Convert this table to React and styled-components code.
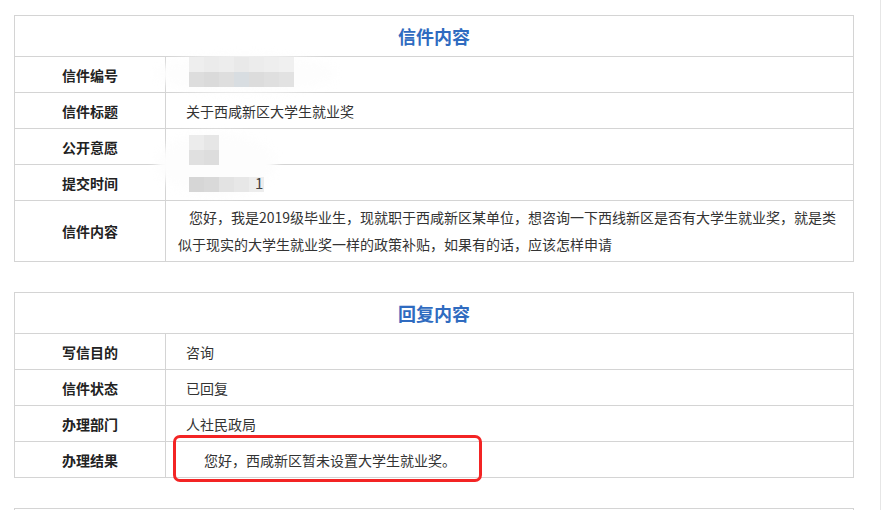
import React from "react"
import styled, { createGlobalStyle } from "styled-components"

const GlobalStyle = createGlobalStyle`
  body {
    margin: 0;
    background: #fff;
    font-family: "Noto Sans CJK SC", "Noto Sans", sans-serif;
    color: #333;
  }
`

// grey tones of the pixelated (redacted) areas, one row per list
const idTones = [
  ["#eeeeee", "#ebebeb", "#ededed", "#e9e9e9", "#ececec", "#eeeeee", "#f0f0f0"],
  ["#dddddd", "#dadada", "#dedede", "#d8dde1", "#dcdcdc", "#dfdfdf", "#e2e2e2"],
]
const openTones = [
  ["#ececec", "#e6e6e6"],
  ["#e0e0e0", "#dddddd"],
]
const timeTones = [["#d6d6d6", "#d9d9d9", "#e3e3e3", "#e7e7e7", "#ededed"]]

function Mosaic({ tones, left, top, size = 15 }) {
  return (
    <Pixels $left={left} $top={top} $cols={tones[0].length} $size={size}>
      {tones.flat().map((t, i) => (
        <Pixel key={i} $tone={t} />
      ))}
    </Pixels>
  )
}

export default function App() {
  return (
    <>
      <GlobalStyle />
      <Page>
        <Table>
          <colgroup>
            <col style={{ width: 151 }} />
            <col />
          </colgroup>
          <tbody>
            <tr>
              <HeadCell colSpan={2}>信件内容</HeadCell>
            </tr>
            <tr>
              <Label>信件编号</Label>
              <Value>
                <Smear $left={-10} $top={-2} $w={180} $h={38} />
                <Mosaic tones={idTones} left={23} top={0} />
              </Value>
            </tr>
            <tr>
              <Label>信件标题</Label>
              <Value>关于西咸新区大学生就业奖</Value>
            </tr>
            <tr>
              <Label>公开意愿</Label>
              <Value>
                <Smear $left={-10} $top={4} $w={120} $h={62} />
                <Mosaic tones={openTones} left={23} top={6} size={15} />
              </Value>
            </tr>
            <tr>
              <Label>提交时间</Label>
              <Value>
                <Mosaic tones={timeTones} left={23} top={12} size={15} />
                <Digit>1</Digit>
              </Value>
            </tr>
            <tr>
              <Label>信件内容</Label>
              <Content>
                您好，我是2019级毕业生，现就职于西咸新区某单位，想咨询一下西线新区是否有大学生就业奖，就是类<br />
                似于现实的大学生就业奖一样的政策补贴，如果有的话，应该怎样申请
              </Content>
            </tr>
          </tbody>
        </Table>

        <Table>
          <colgroup>
            <col style={{ width: 151 }} />
            <col />
          </colgroup>
          <tbody>
            <tr>
              <HeadCell colSpan={2}>回复内容</HeadCell>
            </tr>
            <tr>
              <Label>写信目的</Label>
              <Value>咨询</Value>
            </tr>
            <tr>
              <Label>信件状态</Label>
              <Value>已回复</Value>
            </tr>
            <tr>
              <Label>办理部门</Label>
              <Value>人社民政局</Value>
            </tr>
            <tr>
              <Label>办理结果</Label>
              <Value $indent={18}>
                您好，西咸新区暂未设置大学生就业奖。
                <Marker />
              </Value>
            </tr>
          </tbody>
        </Table>

        <Table>
          <tbody>
            <tr>
              <HeadCell />
            </tr>
          </tbody>
        </Table>
      </Page>
    </>
  )
}

const Page = styled.div`
  width: 866px;
  min-height: 540px;
  padding: 15px 0 0 14px;
  border-right: 1px solid #e6e6e6;
`

const Table = styled.table`
  width: 840px;
  border-collapse: collapse;
  table-layout: fixed;
  margin-bottom: 30px;

  td {
    border: 1px solid #d4d4d4;
    padding: 0;
    font-size: 14px;
  }
`

const HeadCell = styled.td`
  height: 40px;
  text-align: center;
  font-size: 18px !important;
  font-weight: 700;
  color: #2f6bc0;
`

const Label = styled.td`
  height: 35px;
  text-align: center;
  font-weight: 700;
  color: #222;
`

const Value = styled.td`
  position: relative;
  height: 35px;
  padding: 0 20px !important;
  text-indent: ${p => p.$indent || 0}px;
  color: #333;
`

const Content = styled.td`
  padding: 3px 4px 3px 12px !important;
  line-height: 27px;
  text-indent: 11px;
  color: #333;
`

const Smear = styled.span`
  position: absolute;
  left: ${p => p.$left}px;
  top: ${p => p.$top}px;
  width: ${p => p.$w}px;
  height: ${p => p.$h}px;
  border-radius: 50%;
  background: #fdfdfd;
  filter: blur(5px);
`

const Pixels = styled.span`
  position: absolute;
  left: ${p => p.$left}px;
  top: ${p => p.$top}px;
  display: grid;
  grid-template-columns: repeat(${p => p.$cols}, ${p => p.$size}px);
  grid-auto-rows: ${p => p.$size}px;
  filter: blur(0.6px);
`

const Pixel = styled.span`
  background: ${p => p.$tone};
`

const Digit = styled.span`
  position: absolute;
  left: 89px;
  top: 9px;
  line-height: 18px;
  font-size: 15px;
  color: #444;
`

const Marker = styled.span`
  position: absolute;
  left: 7px;
  top: -7px;
  width: 303px;
  height: 41px;
  border: 3px solid #f32424;
  border-radius: 7px;
`
